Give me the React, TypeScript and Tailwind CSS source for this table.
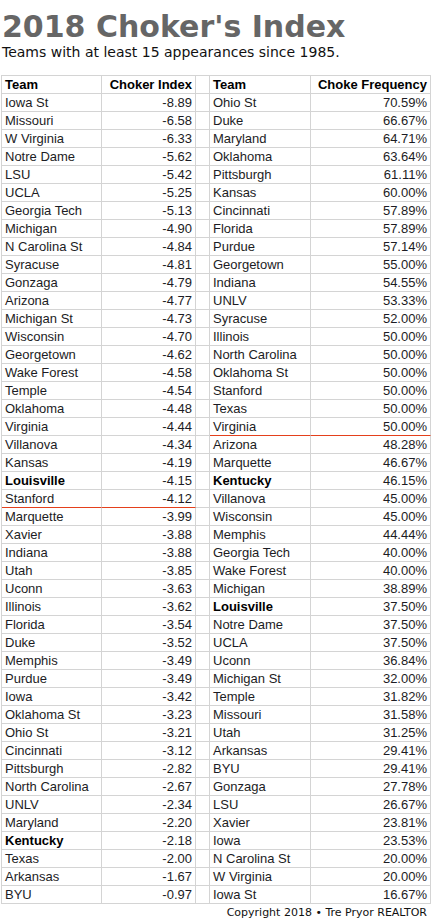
import React from "react";

const left: [string, string, boolean?][] = [
  ["Iowa St", "-8.89"], ["Missouri", "-6.58"], ["W Virginia", "-6.33"], ["Notre Dame", "-5.62"],
  ["LSU", "-5.42"], ["UCLA", "-5.25"], ["Georgia Tech", "-5.13"], ["Michigan", "-4.90"],
  ["N Carolina St", "-4.84"], ["Syracuse", "-4.81"], ["Gonzaga", "-4.79"], ["Arizona", "-4.77"],
  ["Michigan St", "-4.73"], ["Wisconsin", "-4.70"], ["Georgetown", "-4.62"], ["Wake Forest", "-4.58"],
  ["Temple", "-4.54"], ["Oklahoma", "-4.48"], ["Virginia", "-4.44"], ["Villanova", "-4.34"],
  ["Kansas", "-4.19"], ["Louisville", "-4.15", true], ["Stanford", "-4.12"], ["Marquette", "-3.99"],
  ["Xavier", "-3.88"], ["Indiana", "-3.88"], ["Utah", "-3.85"], ["Uconn", "-3.63"],
  ["Illinois", "-3.62"], ["Florida", "-3.54"], ["Duke", "-3.52"], ["Memphis", "-3.49"],
  ["Purdue", "-3.49"], ["Iowa", "-3.42"], ["Oklahoma St", "-3.23"], ["Ohio St", "-3.21"],
  ["Cincinnati", "-3.12"], ["Pittsburgh", "-2.82"], ["North Carolina", "-2.67"], ["UNLV", "-2.34"],
  ["Maryland", "-2.20"], ["Kentucky", "-2.18", true], ["Texas", "-2.00"], ["Arkansas", "-1.67"],
  ["BYU", "-0.97"],
];

const right: [string, string, boolean?][] = [
  ["Ohio St", "70.59%"], ["Duke", "66.67%"], ["Maryland", "64.71%"], ["Oklahoma", "63.64%"],
  ["Pittsburgh", "61.11%"], ["Kansas", "60.00%"], ["Cincinnati", "57.89%"], ["Florida", "57.89%"],
  ["Purdue", "57.14%"], ["Georgetown", "55.00%"], ["Indiana", "54.55%"], ["UNLV", "53.33%"],
  ["Syracuse", "52.00%"], ["Illinois", "50.00%"], ["North Carolina", "50.00%"], ["Oklahoma St", "50.00%"],
  ["Stanford", "50.00%"], ["Texas", "50.00%"], ["Virginia", "50.00%"], ["Arizona", "48.28%"],
  ["Marquette", "46.67%"], ["Kentucky", "46.15%", true], ["Villanova", "45.00%"], ["Wisconsin", "45.00%"],
  ["Memphis", "44.44%"], ["Georgia Tech", "40.00%"], ["Wake Forest", "40.00%"], ["Michigan", "38.89%"],
  ["Louisville", "37.50%", true], ["Notre Dame", "37.50%"], ["UCLA", "37.50%"], ["Uconn", "36.84%"],
  ["Michigan St", "32.00%"], ["Temple", "31.82%"], ["Missouri", "31.58%"], ["Utah", "31.25%"],
  ["Arkansas", "29.41%"], ["BYU", "29.41%"], ["Gonzaga", "27.78%"], ["LSU", "26.67%"],
  ["Xavier", "23.81%"], ["Iowa", "23.53%"], ["N Carolina St", "20.00%"], ["W Virginia", "20.00%"],
  ["Iowa St", "16.67%"],
];

function Cell({
  children,
  align = "left",
  bold = false,
  red = false,
}: {
  children?: React.ReactNode;
  align?: "left" | "right";
  bold?: boolean;
  red?: boolean;
}) {
  const cls = [
    "h-[18px] flex items-center px-[3px] whitespace-nowrap overflow-hidden border-r border-b border-r-[#d4d4d4]",
    red ? "border-b-[#e4401c]" : "border-b-[#d4d4d4]",
    align === "right" ? "justify-end" : "justify-start",
    bold ? "font-bold text-black" : "text-[#1c1c24]",
  ].join(" ");
  return <div className={cls}>{children}</div>;
}

export default function App() {
  return (
    <div className="w-[432px] min-h-[923px] bg-white font-[DejaVu_Sans,sans-serif]">
      <div className="pl-[2px] pt-[9px] flex flex-col">
        <h1 className="text-[30px] leading-[36px] font-bold text-[#666666]">
          2018 Choker&apos;s Index
        </h1>
        <p className="text-[14px] leading-[16px] text-[#111] -mt-px">
          Teams with at least 15 appearances since 1985.
        </p>
      </div>
      <div className="ml-px mt-[15px] grid grid-cols-[100px_94px_14px_101px_120px] border-l border-t border-l-[#d4d4d4] border-t-[#d4d4d4] w-[430px] text-[13px] font-[Liberation_Sans,Arial,sans-serif]">
        <Cell bold>Team</Cell>
        <Cell bold align="right">Choker Index</Cell>
        <Cell />
        <Cell bold>Team</Cell>
        <Cell bold align="right">Choke Frequency</Cell>
        {left.map((l, i) => {
          const r = right[i];
          const redL = i === 22;
          const redR = i === 18;
          return (
            <React.Fragment key={i}>
              <Cell bold={!!l[2]} red={redL}>{l[0]}</Cell>
              <Cell align="right" red={redL}>{l[1]}</Cell>
              <Cell />
              <Cell bold={!!r[2]} red={redR}>{r[0]}</Cell>
              <Cell align="right" red={redR}>{r[1]}</Cell>
            </React.Fragment>
          );
        })}
      </div>
      <p className="flex justify-end pr-[5px] mt-[2px] text-[11px] leading-[13px] text-[#111]">
        Copyright 2018 • Tre Pryor REALTOR
      </p>
    </div>
  );
}
